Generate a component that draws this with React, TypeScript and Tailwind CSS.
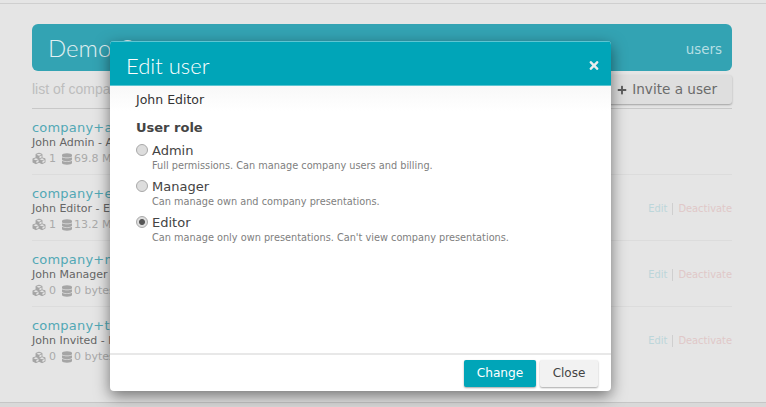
import { FaCubes, FaDatabase, FaPlus, FaTimes } from "react-icons/fa";

const users = [
  { email: "company+admin@example.com", name: "John Admin - Admin", cubes: "1", size: "69.8 MB", actions: false },
  { email: "company+editor@example.com", name: "John Editor - Editor", cubes: "1", size: "13.2 MB", actions: true },
  { email: "company+manager@example.com", name: "John Manager - Manager", cubes: "0", size: "0 bytes", actions: true },
  { email: "company+test@example.com", name: "John Invited - Invited", cubes: "0", size: "0 bytes", actions: true },
];

const roles = [
  { label: "Admin", text: "Full permissions. Can manage company users and billing.", checked: false },
  { label: "Manager", text: "Can manage own and company presentations.", checked: false },
  { label: "Editor", text: "Can manage only own presentations. Can't view company presentations.", checked: true },
];

const dejavu = "font-['DejaVu_Sans',sans-serif]";

export default function App() {
  return (
    <div className={`relative h-[407px] w-[766px] overflow-hidden bg-[#e5e5e5] ${dejavu}`}>
      <div className="h-[4px] border-b border-[#cfcfcf]" />
      <div className="flex h-[398px] w-[764px] flex-col pl-[32px] pr-[32px] pt-[20px]">
        <div className="flex h-[47px] items-center justify-between rounded-[6px] bg-[#33a3b3] pl-[16px] pr-[10px]">
          <span className="font-['Lato',sans-serif] text-[24px] font-light text-[#e3f0f2]">Demo Company</span>
          <span className="mt-[5px] text-[13.4px] text-[#b5dfe4]">users</span>
        </div>
        <div className="flex h-[38px] items-start justify-between border-b border-[#c8c8c8] pt-[4px]">
          <span className="pt-[4px] font-['Liberation_Sans',sans-serif] text-[14px] text-[#bdbdbd]">list of company users</span>
          <button className="flex h-[29px] items-center gap-[5px] rounded-[3px] bg-[#dedede] pl-[130px] pr-[15px] text-[13.6px] text-[#6b6b6b] shadow-[0_1px_2px_rgba(0,0,0,0.3)]">
            <FaPlus className="h-[10px] w-[10px] text-[#5c5c5c]" />
            Invite a user
          </button>
        </div>
        {users.map((u, i) => (
          <div key={u.email} className={`flex h-[66px] shrink-0 items-center justify-between ${i < 3 ? "border-b border-[#dcdcdc]" : ""}`}>
            <div className="flex h-[66px] flex-col pt-[11px]">
              <span className="text-[13px] leading-[15px] tracking-[0.2px] text-[#52a8b5]">{u.email}</span>
              <span className="text-[11px] leading-[15px] text-[#666666]">{u.name}</span>
              <span className="mt-[1px] flex items-center text-[11px] leading-[16px] text-[#aaaaaa]">
                <FaCubes className="mr-[3px] h-[13px] w-[14px] text-[#a5a5a5]" />
                {u.cubes}
                <FaDatabase className="ml-[6px] mr-[2px] h-[12px] w-[10px] text-[#a5a5a5]" />
                {u.size}
              </span>
            </div>
            {u.actions && (
              <div className="mt-[2px] flex items-center text-[9.9px] leading-[12px]">
                <span className="text-[#bcd6da]">Edit</span>
                <span className="mx-[5px] h-[12px] w-px bg-[#cfcfcf]" />
                <span className="text-[#e0c8c8]">Deactivate</span>
              </div>
            )}
          </div>
        ))}
      </div>
      <div className="h-[5px] border-t border-[#c6c6c6] bg-[#d9d9d9]" />

      <div className="absolute left-[110px] top-[41px] flex h-[350px] w-[501px] flex-col overflow-hidden rounded-[4px] bg-white shadow-[0_5px_15px_rgba(0,0,0,0.5)]">
        <div className="flex h-[45px] shrink-0 items-center justify-between border-y border-t-[#5cc5d2] border-b-[#5cc5d2] bg-[#00a5b8] pl-[16px] pr-[11px]">
          <span className="pt-[3px] font-['Lato',sans-serif] text-[22px] font-light text-white">Edit user</span>
          <FaTimes className="mt-[3px] h-[13px] w-[12px] text-[#e8eced]" />
        </div>
        <div className="flex-1 bg-[linear-gradient(#f8f8f8,#ffffff_25px)] pl-[26px] pt-[6px]">
          <div className="text-[12.5px] leading-[16px] text-[#333333]">John Editor</div>
          <div className="mt-[12px] text-[13px] font-bold leading-[16px] text-[#444444]">User role</div>
          <div className="mt-[6px] flex flex-col gap-[5px]">
            {roles.map((r) => (
              <label key={r.label} className="block">
                <span className="flex items-center gap-[4px]">
                  <input
                    type="radio"
                    readOnly
                    checked={r.checked}
                    className={`-mt-[2px] h-[12px] w-[12px] appearance-none rounded-full border border-[#a9a9a9] ${
                      r.checked
                        ? "bg-[radial-gradient(circle,#555555_0,#555555_2.5px,#dddddd_3.5px)]"
                        : "bg-[#dddddd]"
                    }`}
                  />
                  <span className="text-[13px] leading-[17px] text-[#444444]">{r.label}</span>
                </span>
                <span className="block pl-[16px] text-[9.75px] leading-[14px] text-[#808080]">{r.text}</span>
              </label>
            ))}
          </div>
        </div>
        <div className="flex h-[38px] shrink-0 items-center justify-end gap-[4px] border-t-2 border-[#e8e8e8] pr-[13px]">
          <button className="h-[27px] w-[72px] rounded-[2px] bg-[#00a5b8] text-[12.2px] font-medium text-white shadow-[0_1px_2px_rgba(0,0,0,0.35)]">Change</button>
          <button className="h-[27px] w-[58px] rounded-[2px] bg-[#f2f2f2] text-[12px] text-[#444444] shadow-[0_1px_2px_rgba(0,0,0,0.35)]">Close</button>
        </div>
      </div>
    </div>
  );
}
